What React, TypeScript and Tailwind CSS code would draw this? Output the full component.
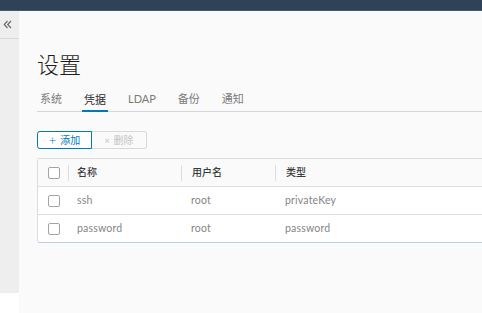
const tabs = ['系统', '凭据', 'LDAP', '备份', '通知'];

const rows = [
  { name: 'ssh', user: 'root', type: 'privateKey' },
  { name: 'password', user: 'root', type: 'password' },
];

const font = { fontFamily: 'Lato, "Noto Sans CJK SC", sans-serif' };

function Checkbox() {
  return <div className="h-[12px] w-[12px] rounded-[2px] border border-[#a3a3a3] bg-white" />;
}

export default function App() {
  return (
    <div className="flex h-[313px] w-[482px] flex-col overflow-hidden bg-white" style={font}>
      {/* top header */}
      <div className="h-[11px] shrink-0 bg-[#2e4258] border-b border-[#46586c]" />

      <div className="flex flex-1">
        {/* collapsed sidenav */}
        <div className="flex w-[19px] shrink-0 flex-col">
          <div className="flex h-[282px] flex-col bg-[#eeeeee]">
            <div className="flex h-[28px] items-center border-b border-[#d8d8d8] pl-[3px]">
              <svg width="9" height="9" viewBox="0 0 9 9" fill="none" stroke="#666" strokeWidth="1.1">
                <polyline points="4.5,1 1.2,4.5 4.5,8" />
                <polyline points="8,1 4.7,4.5 8,8" />
              </svg>
            </div>
          </div>
        </div>

        {/* content */}
        <div className="flex-1 overflow-hidden bg-[#fafafa] pl-[18px] pt-[41px]">
          <h1 className="text-[22px] leading-[26px] font-light text-[#1b1b1b]">设置</h1>

          <div className="mt-[10px] flex h-[24px] items-stretch gap-[18px] border-b border-[#d7d7d7] pl-[1px]">
            {tabs.map((t) => (
              <div
                key={t}
                className={
                  t === '凭据'
                    ? 'flex items-center border-b-2 border-[#0079b8] px-[2px] pt-[2px] text-[11px] text-[#2b2b2b] -mb-px'
                    : 'flex items-center px-[2px] text-[11px] text-[#7a7a7a]'
                }
              >
                {t}
              </div>
            ))}
          </div>

          <div className="mt-[19px] flex">
            <button className="flex h-[18px] w-[55px] items-center justify-center gap-[4px] rounded-l-[3px] border border-[#0079b8] bg-white text-[10px] text-[#0079b8]">
              <span className="text-[13px] font-light leading-none">+</span>
              <span>添加</span>
            </button>
            <button className="flex h-[18px] w-[55px] items-center justify-center gap-[4px] rounded-r-[3px] border border-l-0 border-[#d8d8d8] bg-[#fafafa] text-[10px] text-[#c4c4c4]">
              <span className="text-[9px] leading-none">×</span>
              <span>删除</span>
            </button>
          </div>

          <div className="mt-[9px] w-[470px] rounded-[2px] border border-[#dcdcdc] border-b-[#bfd0e3] text-[10px]">
            <div className="grid h-[27px] grid-cols-[30px_113px_94px_1fr] items-center bg-[#fafafa] font-medium text-[#3a3a3a]">
              <div className="flex justify-end pr-[8px]">
                <Checkbox />
              </div>
              <div className="flex h-[16px] items-center border-l border-[#dddddd] pl-[8px]">名称</div>
              <div className="flex h-[16px] items-center border-l border-[#dddddd] pl-[10px]">用户名</div>
              <div className="flex h-[16px] items-center border-l border-[#dddddd] pl-[10px]">类型</div>
            </div>
            {rows.map((r) => (
              <div
                key={r.name}
                className="grid h-[28px] grid-cols-[30px_113px_94px_1fr] items-center border-t border-[#dddddd] bg-white text-[10.5px] tracking-[0.2px] text-[#858585]"
              >
                <div className="flex justify-end pr-[8px]">
                  <Checkbox />
                </div>
                <div className="pl-[9px]">{r.name}</div>
                <div className="pl-[10px]">{r.user}</div>
                <div className="pl-[10px]">{r.type}</div>
              </div>
            ))}
          </div>
        </div>
      </div>
    </div>
  );
}
